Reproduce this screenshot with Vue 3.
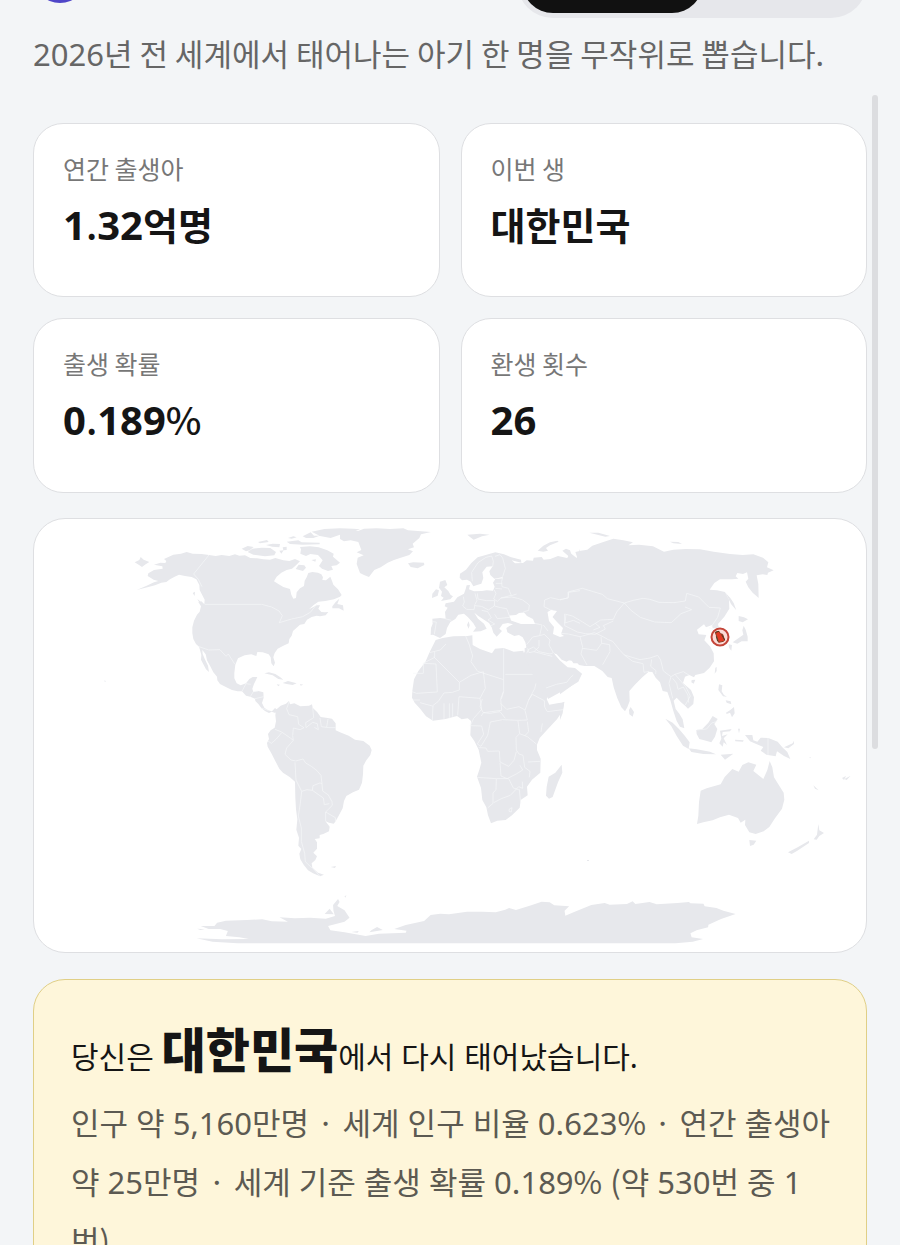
<template>
  <main class="page">
    <header class="top-bar">
      <span class="brand-mark"></span>
      <div class="segmented">
        <button
          v-for="mode in modes"
          :key="mode"
          type="button"
          class="segment"
          :class="{ active: currentMode === mode }"
          :aria-label="mode"
          @click="currentMode = mode"
        ></button>
      </div>
    </header>

    <p class="intro"><span class="number">2026</span>년 전 세계에서 태어나는 아기 한 명을 무작위로 뽑습니다.</p>

    <section class="stats">
      <article v-for="stat in stats" :key="stat.label" class="stat">
        <span class="stat-label">{{ stat.label }}</span>
        <strong class="stat-value"><template
          v-for="(part, i) in splitText(stat.value)"
          :key="i"
        ><span v-if="part.kind" :class="part.kind">{{ part.text }}</span><template v-else>{{ part.text }}</template></template></strong>
      </article>
    </section>

    <section class="map-card">
      <svg class="map" viewBox="34 519 832 433">
        <!-- North America -->
        <g transform="translate(120 520) scale(.33333)">
          <path class="land" d="M44 127L58 120 62 111 71 119 88 126 77 133 66 141 56 134ZM102 134L121 128 136 129 139 123 132 117 160 104 183 101 200 96 218 101 245 102 267 105 287 108 305 105 328 108 345 103 358 107 375 106 391 114 411 115 430 118 450 119 466 114 490 121 508 123 525 117 540 124 528 136 516 146 500 150 484 158 470 170 462 184 475 192 490 201 510 207 514 224 520 236 528 234 530 217 540 205 552 198 554 182 560 172 565 159 577 156 594 158 604 163 609 172 607 180 618 181 631 170 637 185 640 194 654 208 665 225 660 230 642 238 616 243 595 245 581 255 567 268 580 261 590 256 600 256 595 266 604 276 615 277 625 276 617 286 600 289 590 287 575 291 561 299 553 312 540 314 530 323 519 333 515 347 508 357 506 370 490 377 473 386 464 399 460 412 465 428 461 439 454 430 452 412 446 403 428 397 412 396 409 408 394 403 374 406 354 415 346 434 343 459 343 475 350 490 362 496 378 490 388 477 398 471 412 471 408 480 402 492 397 506 400 516 415 513 430 517 431 533 426 549 433 563 444 571 456 574 465 564 472 569 466 579 455 575 447 579 435 573 424 564 415 552 406 543 405 536 391 530 378 527 366 514 353 514 336 510 319 502 300 492 292 481 291 470 280 457 270 437 261 421 257 403 247 390 248 402 254 416 264 437 267 456 258 448 250 433 243 419 244 405 240 390 237 380 228 372 220 357 217 340 217 322 222 302 231 284 239 275 243 259 235 246 244 244 253 253 254 239 247 226 239 210 238 195 229 178 215 171 195 168 177 164 164 170 150 178 139 186 124 188 105 196 85 201 50 210 80 197 102 187 115 183 101 179 83 168 85 160 102 150 128 146 127 139ZM365 86L383 78 401 81 389 91 378 94ZM397 86L425 83 451 84 468 96 463 106 435 109 400 104 383 96ZM414 66L441 60 446 66 420 70ZM438 75L458 71 480 72 478 82 457 80ZM488 82L500 80 500 90 490 91ZM478 92L491 91 484 101ZM500 65L535 61 545 67 599 68 599 73 548 74 510 72ZM540 81L570 79 596 82 622 91 641 101 639 110 660 128 650 136 634 138 639 149 624 153 606 146 597 138 608 121 594 105 571 102 558 108 541 101 543 88ZM548 49L572 37 582 47 599 47 580 54 558 54ZM575 35L613 27 660 25 700 26 720 28 697 37 660 44 632 54 600 48ZM536 134L553 136 558 143 549 153 527 147ZM504 54L520 49 530 52 515 56ZM574 120L588 118 586 125ZM637 259L647 246 658 236 652 252 669 256 671 272 657 265 637 265ZM218 219L225 215 224 228ZM433 460L447 457 466 462 480 471 490 479 475 477 458 466ZM488 489L504 483 530 490 518 495 500 492ZM470 493L480 494 475 499ZM540 492L550 494 542 497ZM232 237L247 249 254 267 245 260Z"/>
          <path class="border" d="M267 105L221 162 235 178 246 200M254 253H425L455 261 477 273 487 287 478 308 515 297 548 290 571 277 590 253M237 380L266 390 300 389 318 409 325 402 344 432M366 514L378 491 392 493M391 530L400 515 415 513M405 536L431 530M424 564L444 571"/>
        </g>

        <!-- South America -->
        <g transform="translate(240 690) scale(.33333)">
          <path class="land" d="M108 59L122 47 138 41 147 33 150 43 163 40 181 49 207 47 216 43 218 53 232 67 242 81 258 83 276 86 287 100 287 121 300 127 326 137 345 149 370 153 389 167 395 180 391 195 379 211 370 227 369 253 366 278 357 299 339 307 319 318 312 333 308 355 296 377 286 395 281 401 267 398 256 393 269 410 267 424 250 432 239 435 239 445 224 447 231 457 231 476 220 488 231 499 226 510 215 520 217 533 234 548 252 554 240 559 219 550 204 541 191 524 181 508 178 491 184 477 175 467 177 443 169 419 172 388 168 358 166 323 165 275 149 261 129 248 118 236 107 215 94 190 83 170 81 159 87 147 84 132 92 121 104 113 108 94 106 76ZM272 531L288 528 285 534Z"/>
          <path class="border" d="M147 36L140 56 147 74 173 80 176 103 192 113 180 119 160 114 158 137 160 151 151 144 125 126 105 118M125 128L109 147 94 160 84 153M218 52L221 83 197 98 198 113 218 97 232 101 235 119 223 112M240 84L244 110 267 113 287 113M264 87L260 111M160 151L140 174 135 193 153 210 167 213 189 207 197 219 214 229 230 241 243 256 246 281 240 279 219 287 217 301 201 299 185 304 168 270 165 217M246 281L248 303 265 315 276 335 277 346 257 366M217 301L250 324 253 344 268 341M257 366L286 383 287 396M257 366V393M185 304L181 340 175 378 184 414 184 454 194 490 196 515 215 533M217 533L240 559"/>
        </g>

        <!-- Greenland, Europe, the Middle East -->
        <g transform="translate(340 520) scale(.33333)">
          <path class="land" d="M0 38L16 29 54 33 72 26 110 25 150 27 190 25 204 31 273 36 243 43 238 54 218 71 222 82 204 88 219 94 208 105 180 114 162 120 143 128 122 142 103 150 96 159 87 171 72 165 60 159 50 132 53 113 71 106 50 97 64 90 55 66 32 61 12 64 0 57ZM204 130L220 127 252 128 253 135 233 145 212 141ZM382 44L420 41 449 44 426 49 401 59 390 51ZM360 161L378 149 394 129 413 112 437 105 466 97 492 103 514 112 543 119 544 128 515 121 525 130 549 129 560 121 579 122 581 113 605 111 611 119 631 117 654 108 684 115 691 99 710 114 720 87V430L700 430 692 417 680 425 665 419 650 403 641 400 655 430 670 446 620 537 616 537 596 505 576 470 554 432 549 414 541 401 554 397 559 381 556 367 548 352 537 345 523 348 502 337 499 324 508 318 519 313 504 309 488 312 478 326 486 333 470 350 460 338 455 322 447 309 432 299 414 287 403 278 414 296 432 311 440 326 422 334 399 335 408 323 400 310 384 292 372 281 355 284 346 297 331 306 321 324 317 342 300 354 279 344 272 345 273 324 278 311 277 296 301 294 317 296 315 276 323 263 314 259 317 250 342 245 352 232 372 221 377 207 380 196 390 195 387 208 402 214 426 213 440 211 459 212 464 200 459 188 466 177 489 175 486 172 463 176 451 165 448 154 458 139 440 140 427 157 430 174 424 191 411 195 400 199 392 185 381 179 366 181 359 173ZM300 185L316 180 322 195 313 202 325 213 332 225 339 229 331 238 303 243 311 233 303 228 306 215 297 203ZM277 221L288 208 297 211 293 227 276 234ZM593 92L610 77 630 67 652 62 656 65 630 76 618 84 624 92 610 95ZM386 304L389 316 386 326 381 315Z"/>
        </g>

        <!-- Asia -->
        <g transform="translate(560 520) scale(.33333)">
          <path class="land" d="M0 120L17 123 25 108 7 92 18 86 30 91 38 114 46 129 54 119 46 96 62 92 82 89 97 77 130 66 160 56 190 61 219 67 205 76 237 74 279 79 312 95 340 89 377 87 420 88 461 95 510 102 548 105 580 103 609 113 625 127 621 142 641 151 624 158 622 165 608 163 590 166 595 192 596 234 578 218 565 202 557 185 565 176 561 157 549 162 532 159 527 169 535 176 516 178 480 178 463 189 449 209 471 211 495 216 507 239 508 266 493 290 474 312 477 325 458 325 456 315 438 322 432 313 411 329 416 343 439 345 433 361 451 380 461 400 462 424 449 443 432 459 406 465 402 472 388 465 375 470 369 489 393 510 402 532 400 552 384 566 376 558 363 547 350 533 341 542 347 567 358 581 368 598 373 625 360 620 350 603 340 573 331 541 322 516 308 513 300 487 287 473 277 456 266 455 247 472 226 493 208 513 209 543 202 562 195 574 184 562 172 535 161 502 155 474 143 471 127 453 103 438 74 438 57 435 48 424 24 421 0 411Z"/>
          <path class="land" d="M0 443L16 447 29 444 46 452 65 463 50 486 30 501 0 523ZM207 570L212 561 222 576 218 590 208 583ZM395 480L406 479 401 491 394 487ZM466 443L470 441 470 453 464 461ZM88 38L115 38 150 48 136 50ZM330 65L355 66 366 72 340 70ZM497 219L511 234 521 249 529 271 513 252ZM536 288L552 292 564 298 548 307 536 303ZM551 317L557 329 563 350 563 364 545 364 532 371 518 367 535 355 550 344 547 331ZM506 373L516 375 514 392 507 383ZM0 552L13 545 8 580 0 600ZM316 596L338 608 357 627 373 646 389 667 386 687 369 677 350 648 334 619ZM386 685L410 688 450 695 468 703 430 702 394 696ZM409 630L427 627 445 608 458 588 473 597 463 612 472 627 465 650 454 667 438 662 418 657 410 642ZM480 632L515 627 510 634 488 636 486 648 503 643 491 655 501 675 491 667 488 680 478 670 484 656ZM477 493L487 496 485 514 492 525 501 530 489 529 475 510ZM497 541L512 544 514 553 500 548ZM498 578L511 570 522 561 524 580 516 592 510 578 500 582ZM534 626L540 626 537 640ZM555 645L577 645 580 661 592 665 602 653 625 654 653 665 667 682 682 696 691 717 672 708 651 694 647 709 619 704 602 692 610 681 587 671 570 664ZM525 659L551 661 549 665 526 664ZM672 682L698 670 701 662 702 672 685 685ZM482 704L520 701 495 719Z"/>
          <path class="border" d="M0 240L25 233 24 216 67 205 100 215 127 223 142 236 193 249 220 241 249 235 270 238 297 247 342 248 376 243 380 220 416 231 447 262 481 264 473 292 453 321M193 249L170 276 160 298 122 300 90 320 68 306 37 288 14 282 14 317 52 336 76 341 106 343 136 327 130 317 160 303M193 249L214 272 241 292 284 306 334 308 363 281 395 269 375 261M106 310L120 322 100 330M0 340L25 342 60 350 68 348 103 338 123 347 145 359 158 364M60 350L68 382 63 402 81 435M68 385L110 391 125 370 123 350M125 370L149 374 150 395 128 434M158 364L180 391 193 405 240 419 270 414 293 406 302 420 310 453 333 470 345 463 370 455 388 466M193 405L218 424 249 431 252 457 267 454M275 418L272 439 288 452 287 462M333 470L327 490 332 510 338 535M338 475L350 490 354 508 370 501 384 526 386 548M345 463L377 500 391 528 376 555M0 455L39 455 40 478 18 496M411 630L440 627 455 609 472 604M624 654V705M447 323L480 337"/>
        </g>

        <!-- Africa and Arabia -->
        <g transform="translate(400 640) scale(.33333)">
          <path class="land" d="M107 0L128 -6 160 -11 202 -12 217 -14 218 15 240 27 257 33 276 40 285 26 311 24 341 35 370 32 374 55 390 82 404 115 423 152 440 177 448 194 472 190 493 187 488 212 471 238 443 268 419 294 411 314 411 330 422 356 421 398 396 419 381 440 383 466 362 480 359 503 336 526 317 540 292 542 273 550 264 526 259 502 247 480 243 444 231 410 238 389 244 368 236 329 223 303 211 286 212 262 213 243 203 235 185 238 171 228 137 237 99 242 78 229 61 207 44 188 36 173 37 152 42 118 55 93 76 66 88 38ZM485 374L487 398 474 427 458 471 447 476 438 467 440 440 446 410 466 398Z"/>
          <path class="land" d="M374 24L410 20 460 38 479 61 503 82 525 84 546 101 535 125 509 141 444 177 437 151 415 119 392 85 374 51Z"/>
          <path class="border" d="M88 38L121 30 138 12M104 35V52L70 70V100H39M101 50L178 127V150L157 157 132 159 115 184 97 198 60 188M70 70L108 72 112 156 50 160 36 155M38 180H60M99 198L97 240M132 190V237M148 190V235M158 190V230M178 127L213 106 250 95 256 145 240 175 177 170 173 226M197 -12L207 12 218 48 213 65 233 94 311 119V25M316 103H398M311 119V152L302 176 305 211 250 218 240 200 247 177M240 175L245 208 221 235 211 257 245 258 251 283 232 312 243 319 263 286 271 246 308 239 354 241 382 240 375 211 386 180 397 163 433 182 434 201 442 215 489 209M302 190L320 208 357 200 375 210M311 155L304 177M386 180L404 146 408 130M244 228L250 218 270 220 300 215 316 235M354 243L359 281 348 292 349 330 357 342 369 346M359 281L382 290 409 312M382 245L386 275 374 288M427 250L423 276M384 366L420 364M369 346L374 382 390 394 388 412M349 335L342 361 326 379 300 366 298 333 263 334 258 324 236 323M300 368L303 408 321 416 349 402 368 390 360 376M231 412L289 416H326M289 417L288 449 279 459V490L264 503M281 488L304 476 331 466 356 440 368 445 367 425M326 416L340 444 356 449M358 448L362 490M328 507L336 503 334 516 327 514ZM383 25L387 38 402 35 417 21M402 35L440 45 457 49M417 0V20M438 144L469 133 500 127 511 113 520 105"/>
        </g>

        <!-- Inner borders of Europe and the Middle East -->
        <g transform="translate(340 520) scale(.33333)">
          <path class="border" d="M397 184L395 157 414 128 438 112 455 108 460 124 458 140M465 109L480 104 488 114 496 145 488 170 485 185 486 200 505 205 514 226 483 234 472 244 461 237 468 220 462 209M370 230L373 246 368 258 380 268 402 269 405 253 411 241 405 220M412 220L414 237 439 242 464 242 463 258 445 270 425 259 404 257M425 271L443 275 454 293 444 300 464 312 450 318M463 258L482 263 500 266 510 292 472 296 464 283M483 234L515 231 533 235 548 240 568 255 566 271 550 276M277 305L289 306 283 343M315 296L334 301M466 205L486 207M467 190L486 190M512 228L530 222M560 374L578 351 599 347 613 343 630 360 627 375 640 398 630 402 597 395 580 381 565 389 560 400M599 347L606 315 580 309M610 315L624 333M614 240L632 233 658 239 684 234 686 217 720 212M614 240L612 260 632 270 639 271M678 285L675 309 700 301 720 310"/>
        </g>

        <!-- Black Sea and Caspian Sea -->
        <path class="water" d="M509.500 615.500L511 620.500 521 624 535 624 533 619 527 616 524 612.500 519 613 516 615ZM547.500 612L551 610 557 611 552.500 617 557 622 563 628 561 634 564 636 560 637 553 634 554 627 549 621Z"/>

        <!-- Australia and Oceania -->
        <g transform="translate(640 680) scale(.33333)">
          <path class="land" d="M182 332L200 325 242 313 254 291 277 267 296 275 307 255 325 247 349 254 340 273 370 297 382 270 389 243 397 262 402 292 415 313 431 338 433 359 426 386 405 415 388 441 371 454 347 462 328 457 315 435 316 419 302 428 294 414 267 404 240 412 218 421 190 427 171 432 175 407 177 366ZM328 480L349 482 341 494 330 498ZM535 432L538 451 552 459 538 468 530 479 521 478 531 464ZM444 517L473 502 507 482 507 489 472 512 455 522ZM520 316L536 331 525 326ZM613 297L632 287 620 300ZM510 231L514 235 508 233Z"/>
        </g>

        <!-- Antarctica -->
        <g transform="translate(180 880) scale(.38265 .33333)">
          <path class="land" d="M54 138L90 138 97 128 120 122 175 120 215 118 240 124 282 125 260 112 300 115 340 113 381 116 405 108 401 92 400 75 413 57 417 66 411 78 430 91 443 113 430 125 387 138 393 151 430 157 485 168 520 161 590 158 592 152 560 147 590 135 638 123 655 105 680 101 703 103 750 95 790 95 825 97 850 89 860 84 878 90 918 76 945 65 966 67 978 76 1017 79 1005 92 1007 107 1030 96 1075 75 1110 69 1123 74 1168 72 1183 64 1190 72 1227 66 1246 73 1300 69 1330 66 1334 70 1368 71 1371 79 1402 84 1420 92 1452 102 1414 117 1381 134 1380 142 1350 151 1334 160 1337 172 1367 177 1340 185 1295 190 150 190 85 185 43 175 110 178 180 177 155 172 120 168 125 153 105 147 75 147ZM378 102L391 86 402 103ZM500 151L515 141 530 150 495 157ZM430 49L435 46 432 53ZM45 146L65 148 53 150ZM448 156L467 153 464 158Z"/>
        </g>
        <path class="land" d="M104 680.500L106 681 105 682ZM587 860H589V861H587ZM842 778L846 776 844 780Z"/>

        <!-- Marker -->
        <circle class="marker-ring" cx="720" cy="637" r="8.500"/>
        <g transform="translate(560 520) scale(.33333)">
          <path class="marker-shape" d="M466 337L477 334 481 341 488 343 494 361 490 364 476 367 471 352Z"/>
          <path class="marker-accent" d="M466 337L477 334M469 349L473 364M485 344L494 360"/>
        </g>
      </svg>
    </section>

    <section class="result">
      <p class="result-title">당신은 <strong>대한민국</strong>에서 다시 태어났습니다.</p>
      <p class="result-detail"><template
        v-for="(part, i) in splitText(detail)"
        :key="i"
      ><span v-if="part.kind === 'symbol'" class="symbol">{{ part.text }}</span><template v-else>{{ part.text }}</template></template></p>
    </section>

    <span class="scroll-thumb"></span>
  </main>
</template>

<script setup>
import { ref } from 'vue'

const modes = ['환생', '통계']
const currentMode = ref('환생')

const stats = [
  { label: '연간 출생아', value: '1.32억명' },
  { label: '이번 생', value: '대한민국' },
  { label: '출생 확률', value: '0.189%' },
  { label: '환생 횟수', value: '26' }
]

const detail =
  '인구 약 5,160만명 · 세계 인구 비율 0.623% · 연간 출생아 약 25만명 · 세계 기준 출생 확률 0.189% (약 530번 중 1번)'

// Digits and signs are set apart from the hangul around them
function splitText(text) {
  return text
    .split(/(\d+|[.%()·])/)
    .filter(Boolean)
    .map((part) => ({ text: part, kind: kindOf(part) }))
}

function kindOf(part) {
  if (/^\d+$/.test(part)) return 'number'
  if (/^[.%()·]$/.test(part)) return 'symbol'
  return ''
}
</script>

<style>
body {
  margin: 0;
  background: #f3f5f7;
}
</style>

<style scoped>
.page {
  box-sizing: border-box;
  height: 100vh;
  overflow: hidden;
  padding: 0 33px;
  background: #f3f5f7;
  color: #151515;
  font-family: 'Noto Sans CJK KR', 'Noto Sans', sans-serif;
}

.top-bar {
  display: flex;
  align-items: flex-start;
  justify-content: space-between;
  margin-top: -54px;
}

.brand-mark {
  width: 54px;
  height: 54px;
  margin-top: 3px;
  border-radius: 50%;
  background: #4f46c8;
}

.segmented {
  display: flex;
  box-sizing: border-box;
  width: 42%;
  height: 72px;
  padding: 5px;
  border-radius: 36px;
  background: #e6e7eb;
}

.segment {
  flex: 7;
  padding: 0;
  border: none;
  border-radius: 31px;
  background: transparent;
  cursor: pointer;
}

.segment.active {
  flex: 8;
  background: #111;
}

.intro {
  margin: 14px 0 48px;
  color: #666;
  font-size: 31px;
  line-height: 42px;
}

.number {
  font-family: 'Noto Sans', sans-serif;
}

.symbol {
  font-family: 'Noto Sans CJK KR', sans-serif;
  font-weight: 400;
}

.stats {
  display: grid;
  grid-template-columns: 1fr 1fr;
  grid-template-rows: minmax(174px, auto) minmax(175px, auto);
  gap: 21px;
}

.stat {
  display: flex;
  flex-direction: column;
  padding: 27px 29px;
  border: 1px solid #dedfe2;
  border-radius: 30px;
  background: #fff;
}

.stat-label {
  color: #777;
  font-size: 25px;
  line-height: 34px;
}

.stat-value {
  margin-top: 11px;
  font-size: 38px;
  font-weight: 700;
  line-height: 56px;
}

.stat-value .number {
  font-size: 40px;
}

.stat-value .symbol {
  font-weight: 500;
}

.map-card {
  margin-top: 25px;
  border: 1px solid #dedfe2;
  border-radius: 32px;
  background: #fff;
  overflow: hidden;
}

.map {
  display: block;
  width: 100%;
}

.land {
  fill: #e7e8ec;
}

.water {
  fill: #fff;
}

.border {
  fill: none;
  stroke: #f6f7f9;
  stroke-width: 2;
  stroke-linejoin: round;
}

.marker-ring {
  fill: #fbdcd8;
  stroke: #c4463a;
  stroke-width: 2;
}

.marker-shape {
  fill: #e23a24;
  stroke: #8a3a20;
  stroke-width: 3;
}

.marker-accent {
  fill: none;
  stroke: #4d3a20;
  stroke-width: 3;
}

.result {
  margin-top: 26px;
  padding: 34px 33px 37px 37px;
  border: 1px solid #e0cf86;
  border-radius: 32px;
  background: #fef6da;
  font-family: 'Noto Sans', 'Noto Sans CJK KR', sans-serif;
}

.result-title {
  margin: 0;
  font-size: 30px;
  line-height: 72px;
}

.result-title strong {
  font-size: 48px;
  font-weight: 900;
}

.result-detail {
  margin: 0;
  color: #5c5a52;
  font-size: 31px;
  line-height: 57px;
}

.scroll-thumb {
  position: fixed;
  top: 95px;
  right: 22px;
  width: 6px;
  height: 654px;
  border-radius: 3px;
  background: #dcdde0;
}
</style>
